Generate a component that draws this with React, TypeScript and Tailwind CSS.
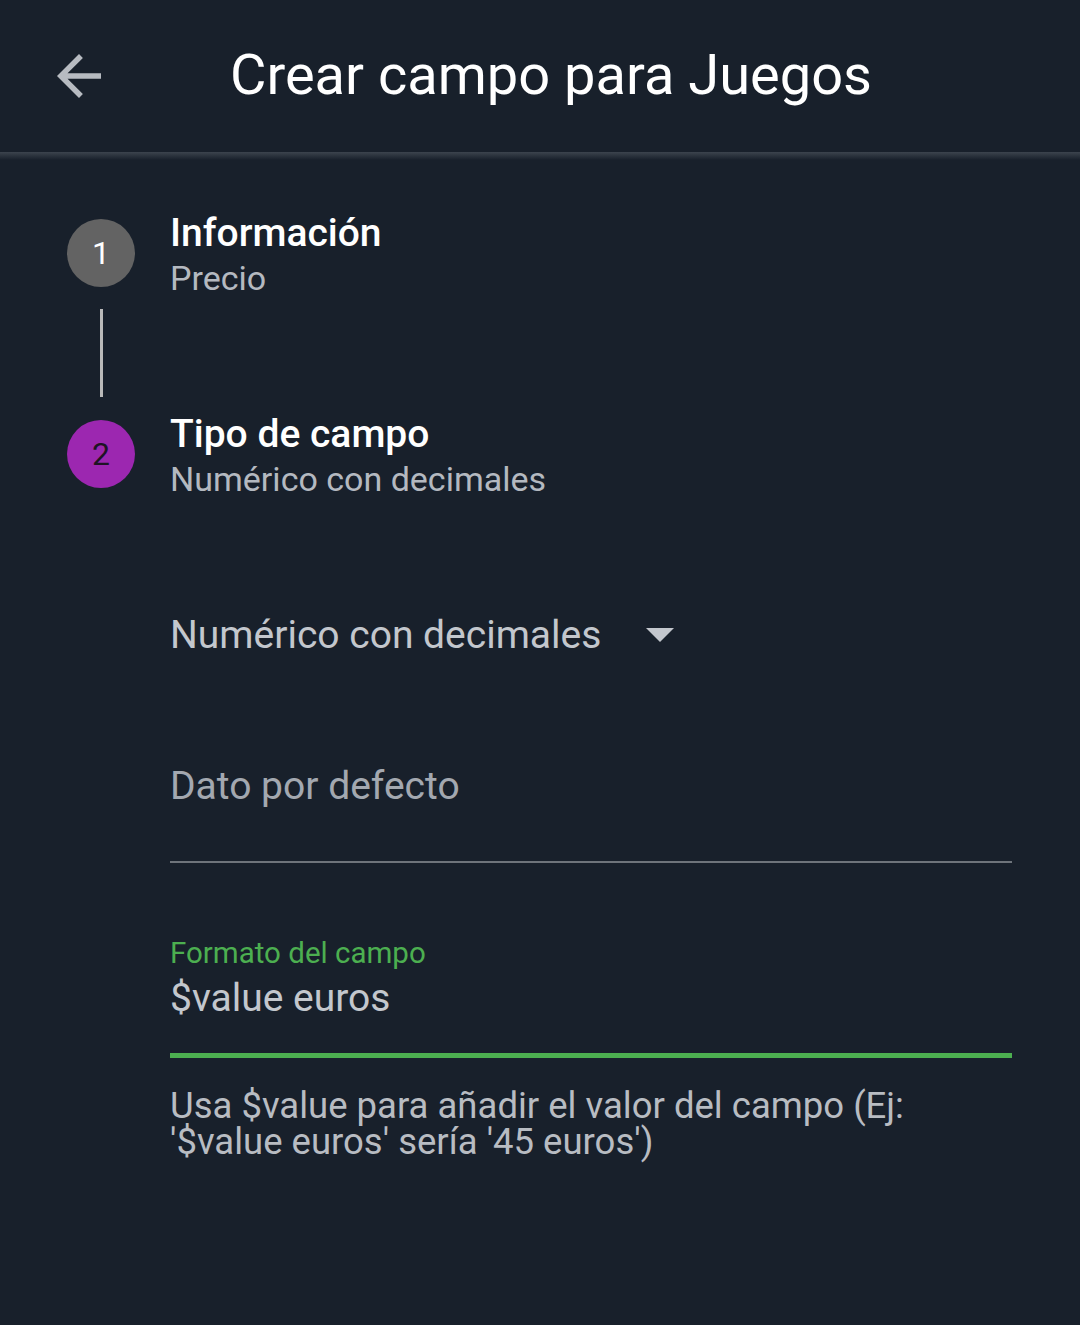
import React from "react";

const Step = ({ n, title, sub, active }: { n: number; title: string; sub: string; active?: boolean }) => (
  <div className="flex items-start gap-[35px] h-[77px]">
    <div
      className={`w-[68px] h-[68px] shrink-0 rounded-full flex items-center justify-center text-[32px] mt-[9px] ${
        active ? "bg-[#9c27b0] text-[#1e1424]" : "bg-[#636363] text-white"
      }`}
    >
      {n}
    </div>
    <div className="flex flex-col">
      <span className="text-[39px] leading-[46px] font-medium text-white">{title}</span>
      <span className="text-[34px] leading-[44px] text-[#b4b9c0]">{sub}</span>
    </div>
  </div>
);

const App = () => {
  return (
    <div className="w-[1080px] h-[1325px] bg-[#18202b] font-['Roboto',sans-serif] overflow-hidden">
      <div className="h-[152px] flex items-center">
        <svg className="ml-[46px]" width="66" height="66" viewBox="0 0 24 24" fill="#b7bbc1">
          <path d="M20 11H7.83l5.59-5.59L12 4l-8 8 8 8 1.41-1.41L7.83 13H20v-2z" />
        </svg>
        <span className="ml-[118px] text-[56px] text-white mt-[-2px]">Crear campo para Juegos</span>
      </div>
      <div className="h-[8px] bg-gradient-to-b from-[#3c444e] to-[#18202b]" />

      <div className="pl-[67px] pt-[50px]">
        <Step n={1} title="Información" sub="Precio" />
        <div className="w-[68px] flex justify-center pt-[22px] pb-[14px]">
          <div className="w-[3px] h-[88px] bg-[#b9b9b9]" />
        </div>
        <Step n={2} title="Tipo de campo" sub="Numérico con decimales" active />

        <div className="pl-[103px] pr-[68px] pt-[123px]">
          <div className="flex items-center gap-[45px] h-[48px]">
            <span className="text-[39px] text-[#c3c7cd]">Numérico con decimales</span>
            <svg width="28" height="14" viewBox="0 0 28 14" fill="#c3c7cd">
              <path d="M0 0h28L14 14z" />
            </svg>
          </div>

          <div className="mt-[104px] h-[100px] pt-[3px] border-b-2 border-[#6e747b]">
            <span className="text-[39px] text-[#a3a8b0] leading-[40px]">Dato por defecto</span>
          </div>

          <div className="mt-[73px] border-b-[5px] border-[#4caf50] pb-[31px]">
            <div className="text-[29.5px] leading-[34px] text-[#4caf50]">Formato del campo</div>
            <div className="text-[39px] leading-[48px] text-[#c3c7cd] mt-[4px]">$value euros</div>
          </div>

          <div className="mt-[30px] text-[36.5px] leading-[36px] text-[#b8bcc2]">
            Usa $value para añadir el valor del campo (Ej: '$value euros' sería '45 euros')
          </div>
        </div>
      </div>
    </div>
  );
};

export default App;
